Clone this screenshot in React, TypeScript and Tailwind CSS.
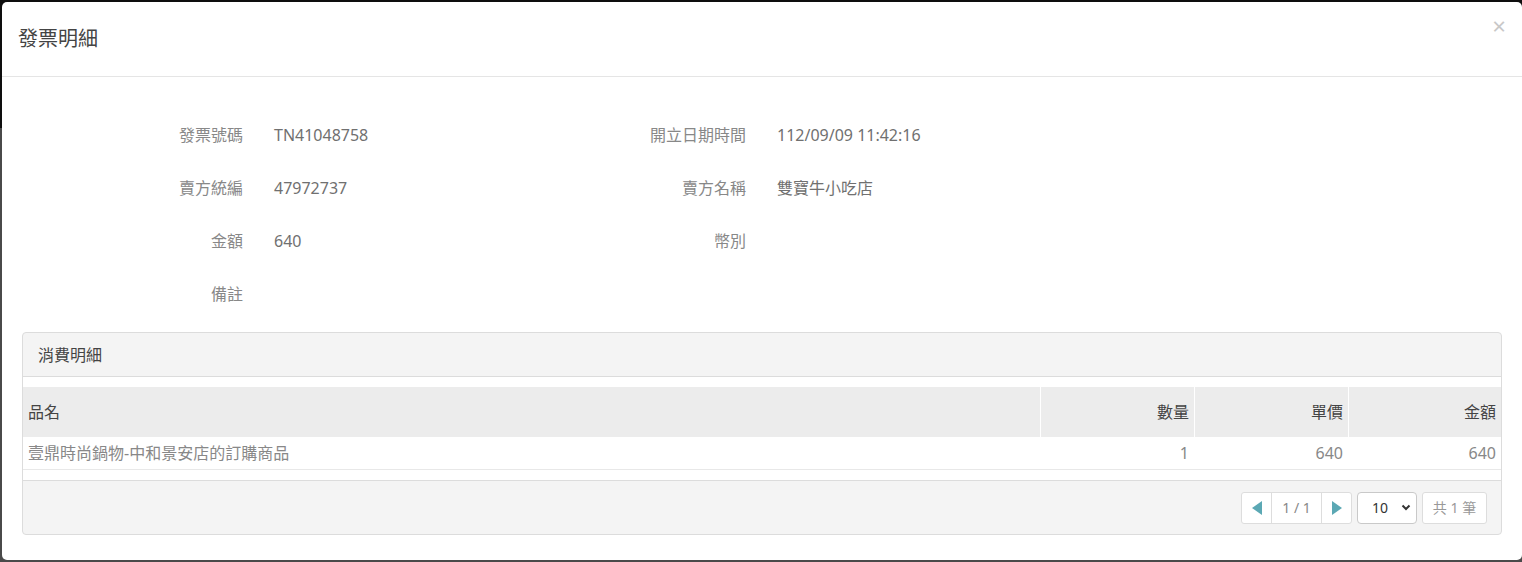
const font = { fontFamily: '"Noto Sans", "Noto Sans CJK TC", sans-serif' }

function Field({ label, value, labelW, valueW }: { label: string; value?: string; labelW: string; valueW: string }) {
  return (
    <>
      <div className={`flex h-[53px] items-center justify-end text-[16px] text-[#888] ${labelW}`}>{label}</div>
      <div className={`flex h-[53px] items-center pl-[31px] text-[16px] text-[#707070] ${valueW}`}>{value}</div>
    </>
  )
}

function Triangle({ dir }: { dir: 'left' | 'right' }) {
  return (
    <svg width="10" height="14" viewBox="0 0 10 14">
      <polygon points={dir === 'left' ? '10,0 10,14 0,7' : '0,0 0,14 10,7'} fill="#5ba8b4" />
    </svg>
  )
}

export default function App() {
  const cols = ['數量', '單價', '金額']
  const rows: [string, string, string, string | undefined][] = [
    ['發票號碼', 'TN41048758', '開立日期時間', '112/09/09 11:42:16'],
    ['賣方統編', '47972737', '賣方名稱', '雙寶牛小吃店'],
    ['金額', '640', '幣別', undefined],
  ]
  return (
    <div
      className="h-[562px] w-[1522px] overflow-hidden bg-[linear-gradient(to_bottom,#0e0e0e_0,#0e0e0e_128px,#4a4a4a_128px)] pl-[2px] pt-[2px]"
      style={font}
    >
      <div className="h-[558px] w-[1520px] rounded-[5px] bg-white">
        {/* header */}
        <div className="relative flex h-[75px] items-center border-b border-[#e5e5e5] pl-[16px]">
          <h4 className="text-[20px] text-[#444]">發票明細</h4>
          <span className="absolute right-[16px] top-[12px] text-[24px] leading-none text-[#c8c8c8]">×</span>
        </div>

        {/* body */}
        <div className="pt-[31px]">
          {rows.map(([l1, v1, l2, v2]) => (
            <div key={l1} className="flex">
              <Field label={l1} value={v1} labelW="w-[241px]" valueW="w-[311px]" />
              <Field label={l2} value={v2} labelW="w-[192px]" valueW="flex-1" />
            </div>
          ))}
          <div className="flex">
            <Field label="備註" labelW="w-[241px]" valueW="flex-1" />
          </div>
        </div>

        {/* panel */}
        <div className="mx-[20px] mt-[12px] rounded-[4px] border border-[#dcdcdc] bg-[#f4f4f4]">
          <div className="flex h-[44px] items-center border-b border-[#dcdcdc] pl-[15px] text-[16px] text-[#444]">
            消費明細
          </div>
          <div className="bg-white py-[10px]">
            <div className="grid h-[50px] grid-cols-[1fr_154px_154px_153px] bg-[#ececec] text-[16px] text-[#444]">
              <div className="flex items-center pl-[5px]">品名</div>
              {cols.map((c) => (
                <div key={c} className="flex items-center justify-end border-l border-white pr-[5px]">
                  {c}
                </div>
              ))}
            </div>
            <div className="grid h-[33px] grid-cols-[1fr_154px_154px_153px] border-b border-[#e8e8e8] text-[16px] text-[#888]">
              <div className="flex items-center pl-[5px]">壹鼎時尚鍋物-中和景安店的訂購商品</div>
              <div className="flex items-center justify-end pr-[5px]">1</div>
              <div className="flex items-center justify-end pr-[5px]">640</div>
              <div className="flex items-center justify-end pr-[5px]">640</div>
            </div>
          </div>
          <div className="flex h-[54px] items-center justify-end gap-[5px] rounded-b-[4px] border-t border-[#dcdcdc] pr-[14px]">
            <div className="flex h-[32px] items-stretch rounded-[3px] border border-[#dddddd] bg-white">
              <div className="flex w-[29px] items-center justify-center">
                <Triangle dir="left" />
              </div>
              <div className="flex w-[51px] items-center justify-center border-x border-[#dddddd] text-[14px] text-[#888]">
                1 / 1
              </div>
              <div className="flex w-[29px] items-center justify-center">
                <Triangle dir="right" />
              </div>
            </div>
            <div className="flex h-[32px] w-[60px] items-center justify-between rounded-[4px] border border-[#c9c9c9] bg-white pl-[14px] pr-[5px] text-[14px] text-[#333]">
              <span>10</span>
              <svg width="10" height="7" viewBox="0 0 10 7">
                <path d="M1.5 1.5 L5 5 L8.5 1.5" fill="none" stroke="#333" strokeWidth="2" />
              </svg>
            </div>
            <div className="flex h-[32px] w-[65px] items-center justify-center rounded-[3px] border border-[#dddddd] bg-white text-[14px] text-[#999]">
              共 1 筆
            </div>
          </div>
        </div>
      </div>
    </div>
  )
}
